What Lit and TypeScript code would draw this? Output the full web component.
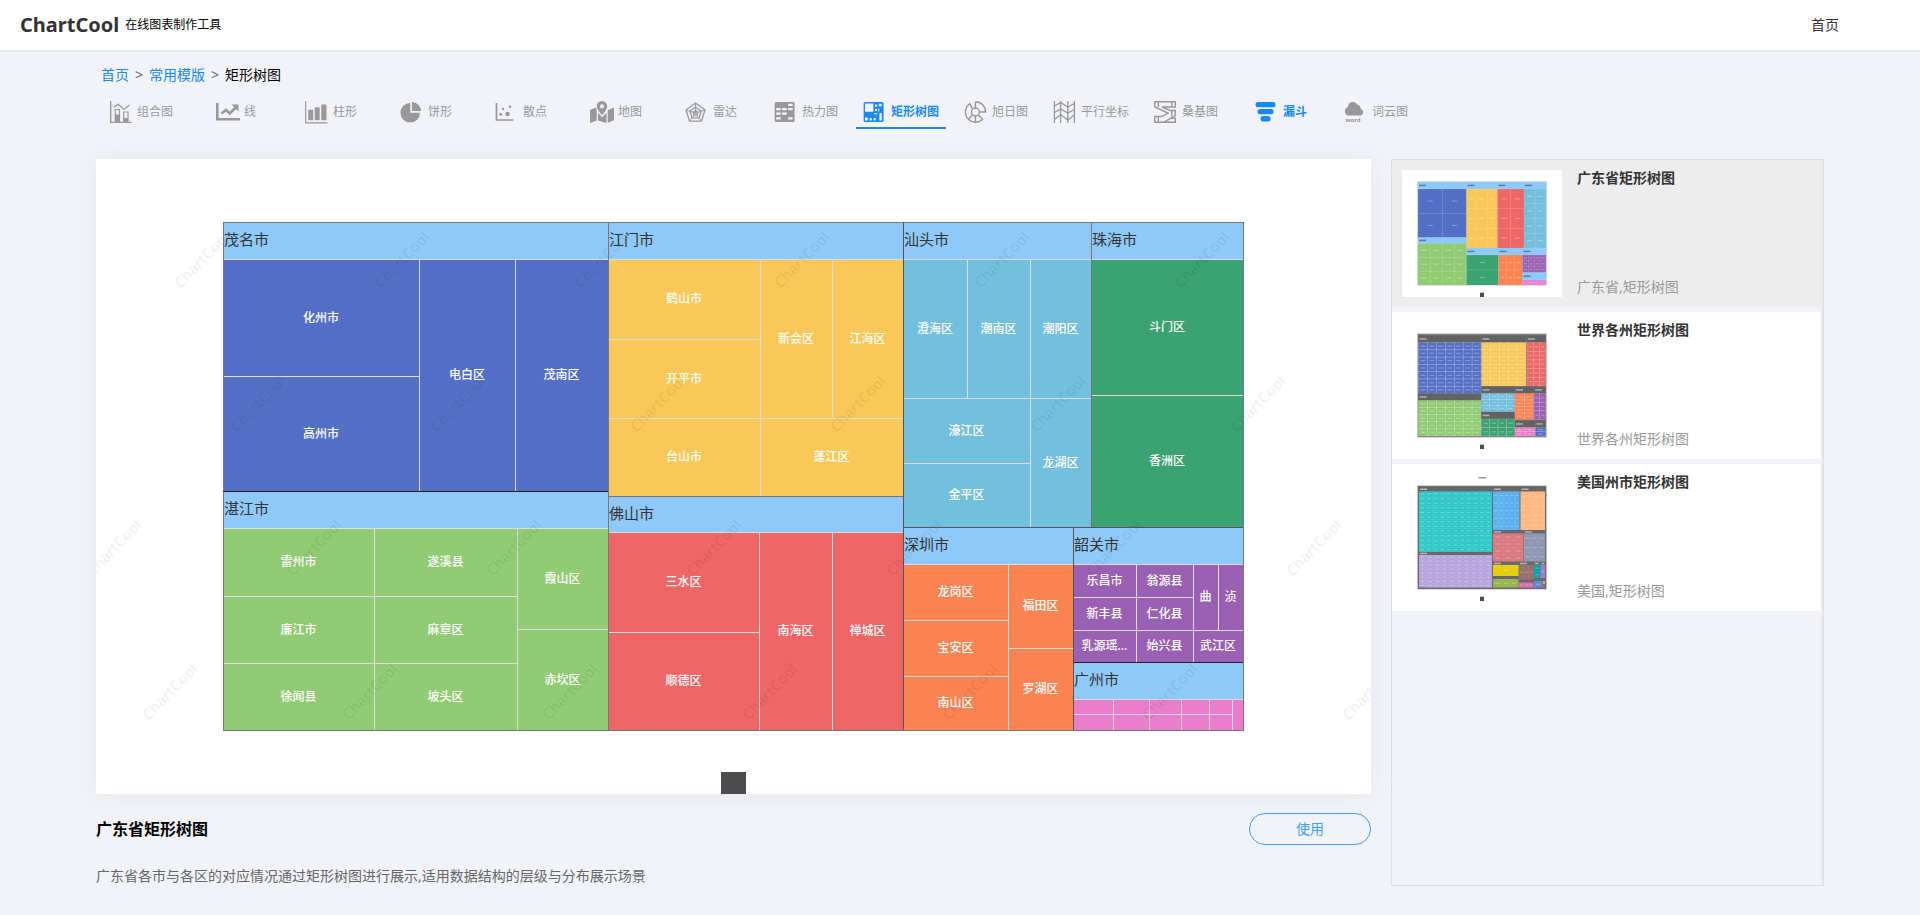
import { LitElement, html, svg, css, TemplateResult, SVGTemplateResult } from "lit";
import { customElement, property } from "lit/decorators.js";

/* ---------- icons ---------- */

const icons: Record<string, SVGTemplateResult> = {
  combo: svg`
    <path d="M1.7 1v21.3h20.8" fill="none" stroke="currentColor" stroke-width="1.3"/>
    <path d="M5 7.5 9 4l6 5.5L20.5 5" fill="none" stroke="currentColor" stroke-width="1.3"/>
    <path d="M6.2 9.5h4.3V22H6.2zM14.7 12H19v10h-4.3z" fill="none" stroke="currentColor" stroke-width="1.2"/>
    <path d="M6 14.5h5V22H6zM14.5 18H19v4h-4.5z" fill="currentColor"/>`,
  line: svg`
    <path d="M1.3 3v16.3H24" fill="none" stroke="currentColor" stroke-width="2.6"/>
    <path d="m5.5 13.5 4.5-3.6 3.7 3.6 6-6" fill="none" stroke="currentColor" stroke-width="2.6"/>
    <path d="M15.5 4.5h7v7z" fill="currentColor"/>`,
  bar: svg`
    <path d="M.7 1v21.9h21.8" fill="none" stroke="currentColor" stroke-width="1.2"/>
    <rect x="3.2" y="9.7" width="5" height="10.5" rx="1" fill="currentColor"/>
    <rect x="9.7" y="7.3" width="5" height="12.9" rx="1" fill="currentColor"/>
    <rect x="16.2" y="4.5" width="5.3" height="15.7" rx="1" fill="currentColor"/>`,
  pie: svg`
    <path d="M10.3 3v9.7H20A9.8 9.8 0 1 1 10.3 3z" fill="currentColor"/>
    <path d="M12 2a9 9 0 0 1 9 9h-9z" fill="currentColor"/>`,
  scatter: svg`
    <path d="M1.5 3v17h17" fill="none" stroke="currentColor" stroke-width="1.7"/>
    <circle cx="5.7" cy="14.2" r="1.5" fill="currentColor"/>
    <circle cx="12.6" cy="14" r="2.2" fill="currentColor"/>
    <circle cx="8" cy="9" r="1.2" fill="currentColor"/>
    <circle cx="15" cy="6.7" r="1.3" fill="currentColor"/>`,
  map: svg`
    <path fill-rule="evenodd" d="M12 1a5.3 5.3 0 0 1 5.3 5.3c0 2.700-2.800 6-5.300 8.900-2.500-2.900-5.300-6.200-5.300-8.900A5.3 5.3 0 0 1 12 1zm0 3.200a2.100 2.100 0 1 0 0 4.200 2.100 2.100 0 0 0 0-4.200z" fill="currentColor"/>
    <path d="M0 10 5.800 7.600l1 3V20.500L0 23zM8 12.700l4 4.500 4.500-4.500V23L8 20.500zM17.700 10.300 24 7.600v12.700l-6.300 2.500z" fill="currentColor"/>`,
  radar: svg`
    <g fill="none" stroke="currentColor" stroke-width="1.3" stroke-linejoin="round">
      <path d="M10.5 3 20 10l-3.6 11.2H4.6L1 10z"/>
      <path d="m10.5 7 5.7 4.2-2.2 6.600H7l-2.200-6.600z"/>
      <path d="m10.5 10.500 2.400 1.800-.9 2.800H9l-.9-2.800z"/>
      <path d="M10.5 3v10M20 10l-9.500 3M16.400 21.200 10.500 13M4.600 21.200l5.900-8.200M1 10l9.500 3" stroke-width=".9"/>
    </g>`,
  heat: svg`
    <rect x=".6" y="2" width="20" height="20" rx="1.5" fill="currentColor"/>
    <path d="M2.200 8h4.500v2.200H2.200zM2.200 12.600h4.500v2.200H2.200zM2.200 17.200h4.500v2.200H2.200zM8.200 8h4.500v2.200H8.200zM8.200 12.600h4.500v2.200H8.200zM14.200 3.800h4.500V6h-4.500zM14.200 8h4.500v2.200h-4.500zM14.200 17.200h4.500v2.200h-4.500z" fill="#f2f3f9"/>`,
  tree: svg`
    <rect x=".6" y="2" width="20" height="20" rx="1.5" fill="currentColor"/>
    <path d="M2 3.600h8.400v8.200H2zM12 4.500h2v2.200h-2zM12 9h2v2h-2zM15.700 3.800h3v2.400h-3zM16.400 13h2.400v7.500h-2.400zM2 17.500h2.800v3H2zM6.700 18h2v2.500h-2zM10.700 18h2v2.500h-2zM15.200 8.500h1v3h-1zM11.200 13h3v1.200h-3z" fill="#f2f3f9"/>`,
  sun: svg`
    <g fill="none" stroke="currentColor" stroke-width="1.4">
      <circle cx="11.400" cy="12" r="4"/>
      <path d="M11.400 1.800A10.200 10.200 0 0 1 21.600 12h-6M11.400 8V1.800M8.400 9 6 3.600A10.200 10.200 0 0 0 4.400 19.300l4.200-4.400M11.400 16v6.200a10 10 0 0 1-7-2.900M11.400 22.200c3 0 5.500-1 7.200-2.900l-4.300-4.400"/>
    </g>`,
  parallel: svg`
    <g fill="none" stroke="currentColor" stroke-width="1.3">
      <path d="M1.400 1v22M7.600 1v22M14.800 1v22M21.400 1v22"/>
      <path d="m1.400 6 6.200-3.500L14.800 7l6.600-3.500M1.400 12.500 7.600 9l7.200 4 6.600-3.500M1.400 19.500l6.200-5 7.200 5.500 6.600-5"/>
    </g>`,
  sankey: svg`
    <g fill="none" stroke="currentColor" stroke-width="1.4">
      <path d="M.8 1.800h20.500V7H8l8 3.500h5.300v5L10 22.200H.8v-5.700h7L14 13 .8 7z"/>
      <path d="M4.300 1.800V7M17.800 1.800V7M4.300 16.500v5.700M10 22.200h11.300v-4h-4.500M17.800 10.500v6"/>
    </g>`,
  funnel: svg`
    <rect x=".5" y="2" width="20" height="5.200" rx="2.500" fill="currentColor"/>
    <rect x="2.500" y="9" width="16" height="5.200" rx="2.500" fill="currentColor"/>
    <rect x="5.500" y="16" width="10" height="5.400" rx="2.500" fill="currentColor"/>`,
  cloud: svg`
    <path d="M4.800 15.500a4.300 4.300 0 0 1-.8-8.400 5 5 0 0 1 9.500-2.300 3.900 3.900 0 0 1 3.200 3.900 3.500 3.500 0 0 1-1.400 6.800z" fill="currentColor"/>
    <text x="9" y="21.500" font-size="6" font-weight="700" text-anchor="middle" fill="currentColor">word</text>`,
};

const tabs: [string, string, boolean?][] = [
  ["combo", "组合图"],
  ["line", "线"],
  ["bar", "柱形"],
  ["pie", "饼形"],
  ["scatter", "散点"],
  ["map", "地图"],
  ["radar", "雷达"],
  ["heat", "热力图"],
  ["tree", "矩形树图"],
  ["sun", "旭日图"],
  ["parallel", "平行坐标"],
  ["sankey", "桑基图"],
  ["funnel", "漏斗", true],
  ["cloud", "词云图"],
];

/* ---------- main chart data: edges are [left, top, right, bottom] ---------- */

type Box = [number, number, number, number];
interface City {
  name: string;
  color: string;
  box: Box;
  head: number;
  areas: [string, ...Box][];
}

const cities: City[] = [
  {
    name: "茂名市", color: "#5470c6", box: [127, 63, 512, 332], head: 100,
    areas: [["化州市", 127, 100, 323, 217], ["高州市", 127, 217, 323, 332], ["电白区", 323, 100, 419, 332], ["茂南区", 419, 100, 512, 332]],
  },
  {
    name: "湛江市", color: "#91cc75", box: [127, 332, 512, 571], head: 369,
    areas: [
      ["雷州市", 127, 369, 278, 437], ["廉江市", 127, 437, 278, 504], ["徐闻县", 127, 504, 278, 571],
      ["遂溪县", 278, 369, 421, 437], ["麻章区", 278, 437, 421, 504], ["坡头区", 278, 504, 421, 571],
      ["霞山区", 421, 369, 512, 470], ["赤坎区", 421, 470, 512, 571],
    ],
  },
  {
    name: "江门市", color: "#fac858", box: [512, 63, 807, 337], head: 100,
    areas: [
      ["鹤山市", 512, 100, 664, 180], ["开平市", 512, 180, 664, 259], ["台山市", 512, 259, 664, 337],
      ["新会区", 664, 100, 736, 259], ["江海区", 736, 100, 807, 259], ["蓬江区", 664, 259, 807, 337],
    ],
  },
  {
    name: "佛山市", color: "#ee6666", box: [512, 337, 807, 571], head: 373,
    areas: [["三水区", 512, 373, 663, 473], ["顺德区", 512, 473, 663, 571], ["南海区", 663, 373, 736, 571], ["禅城区", 736, 373, 807, 571]],
  },
  {
    name: "汕头市", color: "#73c0de", box: [807, 63, 995, 368], head: 100,
    areas: [
      ["澄海区", 807, 100, 871, 239], ["潮南区", 871, 100, 934, 239], ["潮阳区", 934, 100, 995, 239],
      ["濠江区", 807, 239, 934, 304], ["金平区", 807, 304, 934, 368], ["龙湖区", 934, 239, 995, 368],
    ],
  },
  {
    name: "珠海市", color: "#3ba272", box: [995, 63, 1147, 368], head: 100,
    areas: [["斗门区", 995, 100, 1147, 236], ["香洲区", 995, 236, 1147, 368]],
  },
  {
    name: "深圳市", color: "#fc8452", box: [807, 368, 977, 571], head: 405,
    areas: [
      ["龙岗区", 807, 405, 912, 461], ["宝安区", 807, 461, 912, 517], ["南山区", 807, 517, 912, 571],
      ["福田区", 912, 405, 977, 489], ["罗湖区", 912, 489, 977, 571],
    ],
  },
  {
    name: "韶关市", color: "#9a60b4", box: [977, 368, 1147, 503], head: 405,
    areas: [
      ["乐昌市", 977, 405, 1040, 438], ["新丰县", 977, 438, 1040, 471], ["乳源瑶...", 977, 471, 1040, 503],
      ["翁源县", 1040, 405, 1097, 438], ["仁化县", 1040, 438, 1097, 471], ["始兴县", 1040, 471, 1097, 503],
      ["曲", 1097, 405, 1122, 471], ["浈", 1122, 405, 1147, 471], ["武江区", 1097, 471, 1147, 503],
    ],
  },
  {
    name: "广州市", color: "#ea7ccc", box: [977, 503, 1147, 571], head: 540,
    areas: [
      ["", 977, 540, 1017, 555], ["", 977, 555, 1017, 571], ["", 1017, 540, 1053, 555], ["", 1017, 555, 1053, 571],
      ["", 1053, 540, 1085, 555], ["", 1053, 555, 1085, 571], ["", 1085, 540, 1113, 555], ["", 1085, 555, 1113, 571],
      ["", 1113, 540, 1136, 555], ["", 1113, 555, 1136, 571], ["", 1136, 540, 1147, 571],
    ],
  },
];

@customElement("tree-chart")
export class TreeChart extends LitElement {
  static styles = css`
    :host { display: block; }
    svg { display: block; width: 100%; height: auto; }
    .area-name { font-size: 12px; font-weight: 500; fill: #fff; text-anchor: middle; }
    .city-name { font-size: 15px; fill: #333; }
    .area { stroke: #ddd; stroke-width: 1; }
    .edge { fill: none; stroke: #777; stroke-width: 1; }
    .mark { font-family: "Noto Sans", "Open Sans", sans-serif; font-size: 15px; font-weight: 500; fill: #000; fill-opacity: 0.08; text-anchor: middle; }
  `;

  private city(c: City) {
    const [l, t, r, b] = c.box;
    return svg`
      <rect x=${l + 0.5} y=${t + 0.5} width=${r - l} height=${c.head - t} fill="#8fc9f9"/>
      ${c.areas.map(([name, x0, y0, x1, y1]) => svg`
        <rect class="area" x=${x0 + 0.5} y=${y0 + 0.5} width=${x1 - x0} height=${y1 - y0} fill=${c.color}/>
        ${name ? svg`<text class="area-name" x=${(x0 + x1) / 2} y=${(y0 + y1) / 2 + 4}>${name}</text>` : ""}`)}
      <rect class="edge" x=${l + 0.5} y=${t + 0.5} width=${r - l} height=${b - t}/>
      <text class="city-name" x=${l + 1} y=${t + 23}>${c.name}</text>`;
  }

  private watermark() {
    const marks: SVGTemplateResult[] = [];
    for (let row = 0; row < 4; row++) {
      for (let col = -1; col < 7; col++) {
        const x = 106 + row * 56 + col * 200;
        const y = 101 + row * 144;
        if (x < 0 || x > 1290) continue;
        marks.push(svg`<text class="mark" x=${x} y=${y + 5} transform=${`rotate(-46 ${x} ${y})`}>ChartCool</text>`);
      }
    }
    return marks;
  }

  render() {
    return html`
      <svg viewBox="0 0 1275 635" role="img" aria-label="广东省矩形树图">
        ${cities.map((c) => this.city(c))}
        <path d="M127 332.500H512M977 503.500H1147" stroke="#222" fill="none"/>
        <path d="M807.500 63V571M977.500 368V571M807 368.500H1147" stroke="#555" fill="none"/>
        ${this.watermark()}
        <rect x="625" y="613" width="25" height="25" fill="#4b4b4b"/>
      </svg>`;
  }
}

/* ---------- thumbnails ---------- */

/* x, y, width, height, header height, colour, columns, rows */
type Tile = [number, number, number, number, number, string, number, number];
interface Preview {
  title: string;
  tags: string;
  head: string;
  frame: string;
  caption: boolean;
  gridOpacity: number;
  tiles: Tile[];
}

const previews: Preview[] = [
  {
    title: "广东省矩形树图", tags: "广东省,矩形树图", head: "#8fc9f9", frame: "#8fc9f9", caption: false, gridOpacity: 0.16,
    tiles: [
      [16, 12, 48.5, 55.5, 7, "#5470c6", 2, 2], [16, 67.5, 48.5, 47.5, 6, "#91cc75", 4, 3],
      [64.5, 12, 31, 66, 7, "#fac858", 3, 3], [95.5, 12, 26.5, 66, 7, "#ee6666", 2, 3],
      [122, 12, 22, 66, 7, "#73c0de", 2, 4], [64.5, 78, 32, 37, 7, "#3ba272", 1, 2],
      [96.5, 78, 24, 37, 7, "#fc8452", 3, 2], [120.5, 78, 23.5, 24.5, 7, "#9a60b4", 4, 3],
      [120.5, 102.5, 23.5, 12.5, 7.5, "#ea7ccc", 5, 1],
    ],
  },
  {
    title: "世界各州矩形树图", tags: "世界各州矩形树图", head: "#626262", frame: "#767676", caption: false, gridOpacity: 0.3,
    tiles: [
      [16.5, 13.5, 62.5, 58, 7, "#5470c6", 7, 7], [16.5, 71.5, 62.5, 42.5, 7, "#91cc75", 7, 5],
      [79.5, 13.5, 44.5, 50.5, 7, "#fac858", 5, 6], [125, 13.5, 18.5, 50.5, 7, "#ee6666", 3, 5],
      [79.5, 64.5, 33, 25, 7, "#73c0de", 4, 3], [79.5, 90, 33, 24, 7, "#3ba272", 4, 2],
      [113, 64.5, 18.5, 33, 7, "#fc8452", 2, 4], [132, 64.5, 11.5, 33, 7, "#9a60b4", 2, 3],
      [113, 98.5, 20, 15.5, 7, "#ea7ccc", 2, 2], [133.5, 98.5, 10, 15.5, 7, "#5470c6", 1, 2],
    ],
  },
  {
    title: "美国州市矩形树图", tags: "美国,矩形树图", head: "#686868", frame: "#686868", caption: true, gridOpacity: 0.08,
    tiles: [
      [17, 13, 73, 65, 4.5, "#2ec7c9", 11, 13], [17, 78, 73, 35.5, 3, "#b6a2de", 10, 8],
      [91, 13, 26.5, 43, 4.5, "#5ab1ef", 5, 5], [118.5, 13, 24.5, 43, 4.5, "#ffb980", 4, 4],
      [91, 56.5, 30.5, 31, 3, "#d87a80", 3, 4], [122, 56.5, 21, 31, 3, "#8d98b3", 3, 3],
      [91, 88, 25.5, 14, 3, "#e5cf0d", 1, 1], [117, 88, 14.5, 17.5, 3, "#97706f", 3, 1],
      [132, 88, 6, 16, 3, "#07a2a4", 1, 2], [138.5, 88, 4.5, 16, 3, "#9a7fd1", 1, 1],
      [91, 102.5, 25.5, 11, 2.5, "#95b54c", 3, 1], [117, 106, 14.5, 7.5, 2.5, "#dc69aa", 3, 1],
      [132, 105, 8.5, 8.5, 2, "#588dd5", 1, 1], [141, 107, 2, 3, 0, "#f5994e", 1, 1],
      [141, 111, 2, 2.5, 0, "#c05050", 1, 1],
    ],
  },
];

@customElement("tree-preview")
export class TreePreview extends LitElement {
  @property({ attribute: false }) data!: Preview;

  static styles = css`
    :host { display: block; flex: none; width: 160px; background: #fff; }
    svg { display: block; width: 100%; height: auto; }
    .cell { fill: none; stroke: #fff; stroke-width: 0.5; }
    .word { fill: #fff; fill-opacity: 0.28; }
  `;

  private tile([x, y, w, h, hh, color, nx, ny]: Tile) {
    const cw = w / nx;
    const ch = (h - hh) / ny;
    const cells: SVGTemplateResult[] = [];
    for (let i = 0; i < nx; i++) {
      for (let j = 0; j < ny; j++) {
        const cx = x + i * cw;
        const cy = y + hh + j * ch;
        const mark = Math.min(5, cw * 0.55);
        cells.push(svg`
          <rect class="cell" stroke-opacity=${this.data.gridOpacity} x=${cx} y=${cy} width=${cw} height=${ch}/>
          <rect class="word" x=${cx + (cw - mark) / 2} y=${cy + ch / 2 - 0.6} width=${mark} height="1.2"/>`);
      }
    }
    const light = this.data.head === "#8fc9f9";
    return svg`
      <rect x=${x} y=${y} width=${w} height=${hh} fill=${this.data.head}/>
      ${hh > 2.5
        ? svg`<rect x=${x + 1} y=${y + hh / 2 - 0.8} width=${Math.min(7, w * 0.6)} height="1.5" fill=${light ? "#333" : "#fff"} fill-opacity="0.5"/>`
        : ""}
      <rect x=${x} y=${y + hh} width=${w} height=${h - hh} fill=${color}/>
      ${cells}`;
  }

  render() {
    return html`
      <svg viewBox="0 0 160 127" role="img" aria-label=${this.data.title}>
        <rect x="15.5" y="11.8" width="129" height="103.4" fill=${this.data.frame} stroke="#ccc" stroke-width="0.6"/>
        ${this.data.tiles.map((t) => this.tile(t))}
        ${this.data.caption ? svg`<rect x="76.5" y="3" width="7.5" height="1.5" fill="#999"/>` : ""}
        <rect x="78" y="122.7" width="4" height="4.3" fill="#4b4b4b"/>
      </svg>`;
  }
}

/* ---------- page ---------- */

@customElement("app-root")
export class AppRoot extends LitElement {
  static styles = css`
    :host {
      display: block;
      min-height: 100vh;
      background: #f2f3f9;
      color: #333;
      font-family: "Noto Sans", "Noto Sans CJK SC", sans-serif;
      font-size: 14px;
      line-height: 20px;
    }
    * { box-sizing: border-box; }
    a { color: inherit; text-decoration: none; }
    .top {
      display: flex;
      align-items: center;
      height: 50px;
      padding: 0 81px 0 20px;
      background: #fff;
      box-shadow: 0 2px 0 #e8e9ee;
    }
    .brand { font-size: 20px; font-weight: 700; }
    .slogan { margin-left: 6px; font-size: 12px; color: #000; }
    .home { margin-left: auto; }
    .page { width: 90%; margin: 0 auto; padding: 15px 0 30px; }
    .crumbs { display: flex; gap: 6px; padding-left: 5px; margin-bottom: 10px; color: #666; }
    .crumbs a { color: #1989fa; }
    .crumbs .here { color: #000; }
    .tabs { display: flex; gap: 5px; height: 64px; align-items: flex-start; }
    .tab {
      display: flex;
      align-items: center;
      justify-content: center;
      gap: 4px;
      width: 90px;
      height: 34px;
      padding-top: 2px;
      font-size: 12px;
      color: #999;
      white-space: nowrap;
      border-bottom: 2px solid transparent;
    }
    .tab svg { flex: none; width: 24px; height: 24px; }
    .tab.hot { color: #1989fa; font-weight: 700; }
    .tab.active { border-bottom-color: #1989fa; }
    .body { display: grid; grid-template-columns: minmax(0, 1fr) 433px; gap: 20px; }
    .card { background: #fff; box-shadow: 0 0 24px rgba(0, 0, 0, 0.05); overflow: hidden; }
    .info { display: flex; align-items: center; justify-content: space-between; margin-top: 19px; }
    h1 { margin: 0; font-size: 16px; line-height: 24px; color: #000; }
    .use {
      width: 122px;
      height: 32px;
      border: 1px solid #409eff;
      border-radius: 16px;
      background: transparent;
      color: #409eff;
      font: inherit;
      cursor: pointer;
    }
    .desc { margin: 21px 0 0; color: #666; }
    .side { border: 1px solid #dcdde1; background: #ebebed; padding-right: 2px; }
    .list { display: flex; flex-direction: column; gap: 5px; height: 100%; margin: 0; padding: 0; list-style: none; background: #f2f3f9; }
    .item { display: flex; gap: 15px; padding: 10px; background: #fff; }
    .item.active { background: #ededed; }
    .text { display: flex; flex-direction: column; justify-content: space-between; }
    .title { font-weight: 700; line-height: 16px; }
    .tags { color: #999; }
  `;

  private tab([icon, label, hot]: [string, string, boolean?]): TemplateResult {
    const active = icon === "tree";
    return html`
      <a class="tab ${hot || active ? "hot" : ""} ${active ? "active" : ""}" href="#${icon}">
        <svg viewBox="0 0 24 24" aria-hidden="true">${icons[icon]}</svg>
        <span>${label}</span>
      </a>`;
  }

  render() {
    return html`
      <header class="top">
        <span class="brand">ChartCool</span>
        <span class="slogan">在线图表制作工具</span>
        <a class="home" href="#home">首页</a>
      </header>
      <div class="page">
        <nav class="crumbs" aria-label="面包屑">
          <a href="#home">首页</a><span>&gt;</span><a href="#templates">常用模版</a><span>&gt;</span><span class="here">矩形树图</span>
        </nav>
        <nav class="tabs" aria-label="图表类型">${tabs.map((t) => this.tab(t))}</nav>
        <div class="body">
          <main>
            <div class="card"><tree-chart></tree-chart></div>
            <div class="info">
              <h1>广东省矩形树图</h1>
              <button class="use" type="button">使用</button>
            </div>
            <p class="desc">广东省各市与各区的对应情况通过矩形树图进行展示,适用数据结构的层级与分布展示场景</p>
          </main>
          <aside class="side">
            <ul class="list">
              ${previews.map((p, i) => html`
                <li>
                  <a class="item ${i === 0 ? "active" : ""}" href="#preview-${i}">
                    <tree-preview .data=${p}></tree-preview>
                    <span class="text"><span class="title">${p.title}</span><span class="tags">${p.tags}</span></span>
                  </a>
                </li>`)}
            </ul>
          </aside>
        </div>
      </div>`;
  }
}
